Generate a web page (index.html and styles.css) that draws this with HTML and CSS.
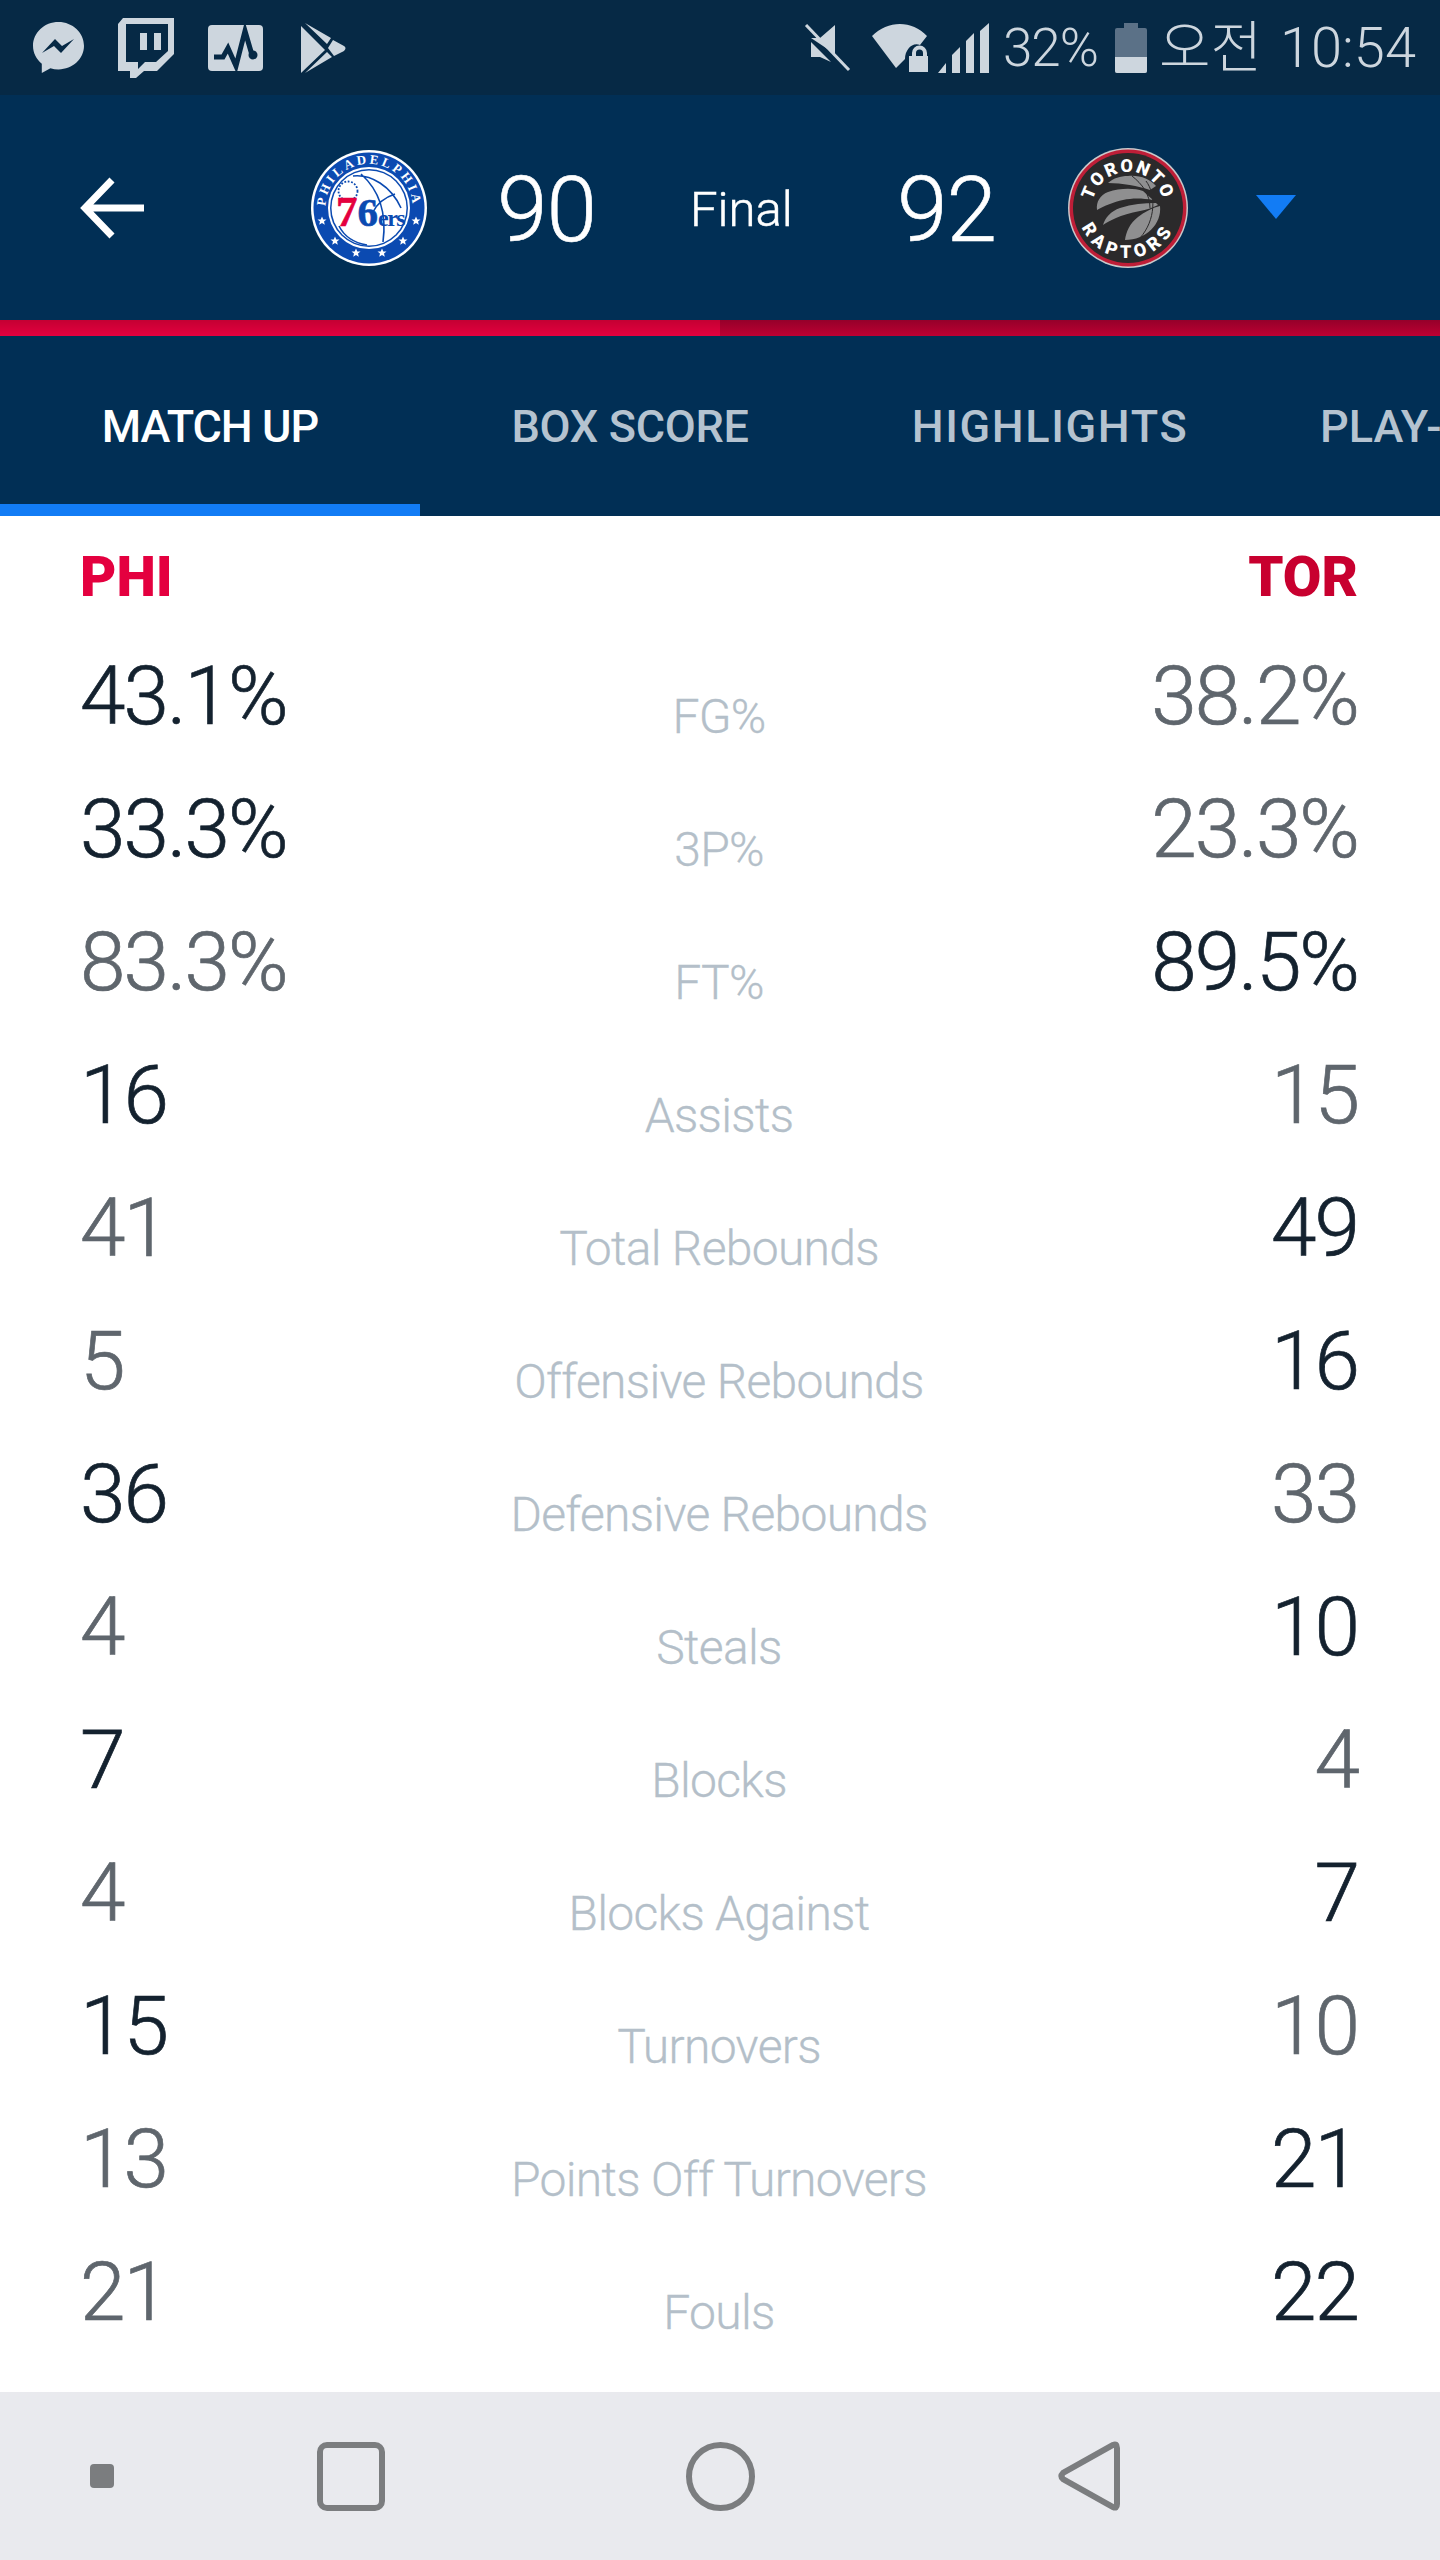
FILE: index.html
```html
<!DOCTYPE html>
<html>
<head>
  <title>Match Up</title>
  <link rel="stylesheet" href="styles.css">
</head>
<body>
  <div class="status-bar">
    <div class="status-group status-apps">
      <svg width="51" height="51" viewBox="0 0 51 51"><path class="ic" d="M25.5 0C11.4 0 0 10.6 0 23.8c0 7.2 3.4 13.6 8.8 17.9V51l8.6-4.8c2.6.8 5.3 1.2 8.1 1.2 14.1 0 25.5-10.6 25.5-23.6S39.6 0 25.5 0z"/><path class="ic-cut" d="M9 31l13-14 7 7 12-7-13 14-7-7z"/></svg>
      <svg width="56" height="60" viewBox="0 0 56 60"><path class="ic" fill-rule="evenodd" d="M5 0H56V36L39 53H26L18 60H12V53H0V6zM8 6V44H20V51L27 44H38L50 33V6zM22 15H29V32H22zM36 15H43V32H36z"/></svg>
      <svg width="55" height="46" viewBox="0 0 55 46"><rect class="ic" width="55" height="46" rx="4"/><path class="ic-line" d="M6 32H15L20 23L28 41L37 6L44 30"/><circle class="ic-cut" cx="45" cy="30" r="4.5"/></svg>
      <svg class="status-play" width="45" height="50" viewBox="0 0 45 50"><path class="ic" d="M0 3L24 27L0 50zM4 0L30 15L26 21zM27 25L32 17L43 23Q46 25 43 28L33 33zM26 29L31 34L4 50z"/></svg>
    </div>
    <div class="status-group status-sys">
      <svg width="47" height="48" viewBox="0 0 47 48"><path class="ic" d="M7 14H16L31 1V30zM7 18L27 38L16 33H7z"/><path class="ic-line-light" d="M2 1L45 46"/></svg>
      <svg class="status-wifi" width="56" height="48" viewBox="0 0 56 48"><path class="ic" d="M0 12C16-4 40-4 55 12L48 21C40 18 33 26 33 35L24 44z"/><path class="ic" fill-rule="evenodd" d="M40 32V29a7.500 7.500 0 0 1 15 0V32H56V48H37V32zM44 32H51V29a3.500 3.500 0 0 0-7 0z"/></svg>
      <svg class="status-signal" width="51" height="50" viewBox="0 0 51 50"><path class="ic" d="M0 50L8 40V50zM14 32L22 24V50H14zM28 18L36 10V50H28zM42 8L51 0V50H42z"/></svg>
      <span class="status-text status-pct">32%</span>
      <div class="battery"><div class="battery-cap"></div><div class="battery-body"><div class="battery-fill"></div></div></div>
      <span class="status-text status-ampm">오전</span>
      <span class="status-text status-clock">10:54</span>
    </div>
  </div>

  <div class="score-header">
    <svg class="back" width="64" height="62" viewBox="0 0 64 62"><path d="M64 31H6M32 3L5 31L32 59"/></svg>
    <svg class="logo logo-home" width="116" height="116" viewBox="0 0 116 116">
      <defs>
        <path id="phiArc" d="M15 64A43.500 43.500 0 1 1 101 64"/>
        <polygon id="star" points="0,-4.6 1.3,-1.500 4.500,-1.400 2,.6 2.800,3.800 0,2 -2.800,3.800 -2,.6 -4.500,-1.400 -1.300,-1.500"/>
      </defs>
      <circle cx="58" cy="58" r="58" fill="#fff"/>
      <circle cx="58" cy="58" r="55.5" fill="#0b4ab1"/>
      <circle cx="58" cy="58" r="41" fill="#fff"/>
      <circle cx="58" cy="58" r="39" fill="#0b4ab1"/>
      <circle cx="58" cy="58" r="37.500" fill="#fff"/>
      <text class="phi-arc"><textPath href="#phiArc" startOffset="50%" text-anchor="middle">PHILADELPHIA</textPath></text>
      <g class="phi-stars">
        <use href="#star" x="11" y="71"/><use href="#star" x="24" y="91"/><use href="#star" x="45" y="103"/>
        <use href="#star" x="71" y="103"/><use href="#star" x="92" y="91"/><use href="#star" x="105" y="71"/>
      </g>
      <path class="phi-ball" d="M42 26C60 24 80 36 90 58M50 24C68 40 76 62 72 92M84 44C72 48 66 54 62 62M28 76C34 88 44 93 56 95"/>
      <circle class="phi-dots" cx="37" cy="41" r="9.500"/>
      <text class="phi-mark" x="25" y="76"><tspan class="phi-seven">7</tspan><tspan class="phi-six">6</tspan><tspan class="phi-ers">ers</tspan></text>
    </svg>
    <span class="score score-home">90</span>
    <span class="state">Final</span>
    <span class="score score-away">92</span>
    <svg class="logo logo-away" width="120" height="120" viewBox="0 0 120 120">
      <defs>
        <path id="torTop" d="M26.200 72.300A36 36 0 1 1 93.800 72.300"/>
        <path id="torBottom" d="M10 60A50 50 0 0 0 110 60"/>
      </defs>
      <circle cx="60" cy="60" r="60" fill="#c9c9cb"/>
      <circle cx="60" cy="60" r="58.500" fill="#bf1e37"/>
      <circle cx="60" cy="60" r="55" fill="#2b2a2b"/>
      <text class="tor-arc"><textPath href="#torTop" startOffset="50%" text-anchor="middle">TORONTO</textPath></text>
      <text class="tor-arc tor-arc-low"><textPath href="#torBottom" startOffset="50%" text-anchor="middle">RAPTORS</textPath></text>
      <path class="tor-ball" d="M40 35C46 30 52 28 60 28C72 27 82 31 88 38L82 42C70 38 54 35 40 35z"/>
      <path class="tor-ball" d="M29 62C28 54 32 47 40 44C52 40 66 40 75 43L85 52C74 50 64 50 55 52C46 54 36 58 29 62z"/>
      <path class="tor-ball" d="M35 77C37 70 43 63 52 60C64 56 76 55 88 55L90 57C84 60 78 62 72 63C62 65 54 67 48 70C43 72 38 75 35 77z"/>
      <path class="tor-ball" d="M57 92C58 84 62 75 70 69C76 64 84 60 92 58C94 76 78 92 57 92z"/>
      <path class="tor-seam" d="M78 33C88 46 88 72 72 90M64 28C74 36 82 46 82 60"/>
    </svg>
    <div class="caret"></div>
  </div>

  <div class="team-bar"><div class="team-bar-home"></div><div class="team-bar-away"></div></div>

  <div class="tabs">
    <div class="tab tab-active">MATCH UP</div>
    <div class="tab tab-box">BOX SCORE</div>
    <div class="tab tab-wide">HIGHLIGHTS</div>
    <div class="tab tab-cut">PLAY-BY-PLAY</div>
  </div>

  <div class="stats">
    <div class="teams">
      <span class="team team-home">PHI</span>
      <span class="team team-away">TOR</span>
    </div>

    <div class="stat-row"><span class="val win">43.1%</span><span class="stat-label">FG%</span><span class="val right">38.2%</span></div>
    <div class="stat-row"><span class="val win">33.3%</span><span class="stat-label">3P%</span><span class="val right">23.3%</span></div>
    <div class="stat-row"><span class="val">83.3%</span><span class="stat-label">FT%</span><span class="val right win">89.5%</span></div>
    <div class="stat-row"><span class="val win">16</span><span class="stat-label">Assists</span><span class="val right">15</span></div>
    <div class="stat-row"><span class="val">41</span><span class="stat-label">Total Rebounds</span><span class="val right win">49</span></div>
    <div class="stat-row"><span class="val">5</span><span class="stat-label">Offensive Rebounds</span><span class="val right win">16</span></div>
    <div class="stat-row"><span class="val win">36</span><span class="stat-label">Defensive Rebounds</span><span class="val right">33</span></div>
    <div class="stat-row"><span class="val">4</span><span class="stat-label">Steals</span><span class="val right win">10</span></div>
    <div class="stat-row"><span class="val win">7</span><span class="stat-label">Blocks</span><span class="val right">4</span></div>
    <div class="stat-row"><span class="val">4</span><span class="stat-label">Blocks Against</span><span class="val right win">7</span></div>
    <div class="stat-row"><span class="val win">15</span><span class="stat-label">Turnovers</span><span class="val right">10</span></div>
    <div class="stat-row"><span class="val">13</span><span class="stat-label">Points Off Turnovers</span><span class="val right win">21</span></div>
    <div class="stat-row"><span class="val">21</span><span class="stat-label">Fouls</span><span class="val right win">22</span></div>
  </div>

  <div class="nav-bar">
    <div class="nav-dot"></div>
    <div class="nav-square"></div>
    <div class="nav-circle"></div>
    <svg class="nav-back" width="62" height="70" viewBox="0 0 62 70"><path d="M55 4Q59 2 59 7V63Q59 68 55 66L5 38Q2 35 5 32z"/></svg>
  </div>
</body>
</html>
```

FILE: styles.css
```css
/* Reset and base styles */
* {
  margin: 0;
  padding: 0;
  box-sizing: border-box;
}

body {
  width: 1440px;
  height: 2560px;
  overflow: hidden;
  background-color: #ffffff;
  font-family: Roboto, "Noto Sans CJK KR", sans-serif;
  display: flex;
  flex-direction: column;
}

/* Status bar */
.status-bar {
  height: 95px;
  background-color: #062945;
  display: flex;
  align-items: center;
  justify-content: space-between;
  padding: 0 24px 0 33px;
  color: #cdd6de;
}

.status-group {
  display: flex;
  align-items: center;
}

.status-apps {
  gap: 34px;
}

.status-play {
  margin-left: 4px;
}

.ic {
  fill: #cdd6de;
}

.ic-cut {
  fill: #062945;
}

.ic-line {
  fill: none;
  stroke: #062945;
  stroke-width: 5;
}

.ic-line-light {
  fill: none;
  stroke: #cdd6de;
  stroke-width: 3;
}

.status-wifi {
  margin-left: 21px;
}

.status-signal {
  margin-left: 10px;
}

.status-text {
  font-size: 56px;
  font-weight: 300;
  line-height: 60px;
}

.status-pct {
  margin-left: 14px;
  font-size: 53px;
  letter-spacing: -1px;
}

.status-ampm {
  margin-left: 12px;
}

.status-clock {
  margin-left: 18px;
}

.battery {
  margin-left: 17px;
  width: 32px;
  display: flex;
  flex-direction: column;
  align-items: center;
}

.battery-cap {
  width: 14px;
  height: 5px;
  background-color: #5b7187;
}

.battery-body {
  width: 32px;
  height: 45px;
  background-color: #5b7187;
  border-radius: 2px;
  display: flex;
  align-items: flex-end;
}

.battery-fill {
  width: 100%;
  height: 16px;
  background-color: #cdd6de;
  border-radius: 0 0 2px 2px;
}

/* Score header */
.score-header {
  height: 225px;
  background-color: #012f55;
  color: #ffffff;
  display: flex;
  align-items: center;
  padding-left: 80px;
}

.back {
  fill: none;
  stroke: #ffffff;
  stroke-width: 7;
}

.logo {
  display: block;
  flex-shrink: 0;
}

.logo-home {
  margin-left: 167px;
}

.logo-away {
  margin-left: 71px;
}

.score {
  width: 100px;
  font-size: 91px;
  font-weight: 300;
  line-height: 100px;
  letter-spacing: -1px;
  margin-top: 4px;
  -webkit-text-stroke: 0.6px #ffffff;
}

.score-home {
  margin-left: 70px;
}

.score-away {
  margin-left: 102px;
}

.state {
  width: 105px;
  margin-left: 93px;
  margin-top: 4px;
  font-size: 49px;
  font-weight: 300;
  -webkit-text-stroke: 0.5px #ffffff;
}

.caret {
  margin-left: 68px;
  margin-top: -1px;
  width: 0;
  height: 0;
  border-left: 20px solid transparent;
  border-right: 20px solid transparent;
  border-top: 24px solid #127cf5;
}

/* Team colour bar */
.team-bar {
  height: 16px;
  display: flex;
}

.team-bar-home {
  width: 720px;
  background: linear-gradient(#c40033, #e4003f);
}

.team-bar-away {
  width: 720px;
  background: linear-gradient(#95002a, #bd0032);
}

/* Tabs */
.tabs {
  height: 180px;
  background-color: #012f55;
  display: flex;
  overflow: hidden;
}

.tab {
  flex: 0 0 420px;
  font-size: 45px;
  font-weight: 500;
  letter-spacing: -1px;
  color: #b5c3d0;
  text-align: center;
  line-height: 182px;
  white-space: nowrap;
}

.tab-active {
  color: #ffffff;
  border-bottom: 12px solid #127cf5;
}

.tab-box {
  letter-spacing: -0.3px;
}

.tab-wide {
  letter-spacing: 1.6px;
}

.tab-cut {
  padding-left: 60px;
  letter-spacing: 0;
  text-align: left;
}

/* Stats table */
.stats {
  flex: 1;
  padding: 28px 82px 0 80px;
}

.teams {
  display: flex;
  justify-content: space-between;
  margin-bottom: 20px;
}

.team {
  font-size: 56px;
  font-weight: 900;
  line-height: 66px;
}

.team-home {
  color: #e4003f;
}

.team-away {
  color: #c8002f;
}

.stat-row {
  display: grid;
  grid-template-columns: 1fr 560px 1fr;
  height: 133px;
}

.val {
  font-size: 82px;
  font-weight: 300;
  line-height: 133px;
  letter-spacing: -2px;
  color: #5f666d;
  -webkit-text-stroke: 0.7px #5f666d;
}

.val.win {
  color: #14222f;
  -webkit-text-stroke-color: #14222f;
}

.val.right {
  text-align: right;
}

.stat-label {
  font-size: 48px;
  font-weight: 300;
  line-height: 93px;
  letter-spacing: -0.7px;
  padding-top: 40px;
  text-align: center;
  color: #b4bfc9;
  -webkit-text-stroke: 0.3px #b4bfc9;
}

/* Android nav bar */
.nav-bar {
  height: 168px;
  background-color: #e9eaee;
  display: flex;
  align-items: center;
  padding-left: 90px;
}

.nav-dot {
  width: 24px;
  height: 24px;
  border-radius: 4px;
  background-color: #7b7d7f;
}

.nav-square {
  width: 68px;
  height: 69px;
  margin-left: 203px;
  border: 6px solid #7b7d7f;
  border-radius: 10px;
}

.nav-circle {
  width: 69px;
  height: 69px;
  margin-left: 301px;
  border: 6px solid #7b7d7f;
  border-radius: 50%;
}

.nav-back {
  margin-left: 303px;
  fill: none;
  stroke: #7b7d7f;
  stroke-width: 6;
}

/* Team logos */
.phi-arc {
  font-family: "Liberation Serif", serif;
  font-size: 13px;
  font-weight: 700;
  letter-spacing: 2.8px;
  fill: #ffffff;
}

.phi-stars {
  fill: #ffffff;
}

.phi-ball {
  fill: none;
  stroke: #0b4ab1;
  stroke-width: 1.6;
}

.phi-dots {
  fill: #ffffff;
  stroke: #0b4ab1;
  stroke-width: 1.8;
  stroke-dasharray: 1.8 1.6;
}

.phi-mark {
  font-family: "Liberation Serif", serif;
  font-weight: 700;
}

.phi-seven {
  font-size: 43px;
  fill: #e4003f;
  stroke: #e4003f;
  stroke-width: 0.6;
}

.phi-six {
  font-size: 41px;
  fill: #0b4ab1;
  stroke: #0b4ab1;
  stroke-width: 0.6;
}

.phi-ers {
  font-size: 24px;
  letter-spacing: -1.5px;
  fill: #0b4ab1;
}

.tor-arc {
  font-family: Roboto, sans-serif;
  font-size: 18px;
  font-weight: 900;
  letter-spacing: 2px;
  fill: #ffffff;
}

.tor-arc-low {
  letter-spacing: 5px;
}

.tor-ball {
  fill: #8f8f90;
}

.tor-seam {
  fill: none;
  stroke: #2b2a2b;
  stroke-width: 1;
}
```
